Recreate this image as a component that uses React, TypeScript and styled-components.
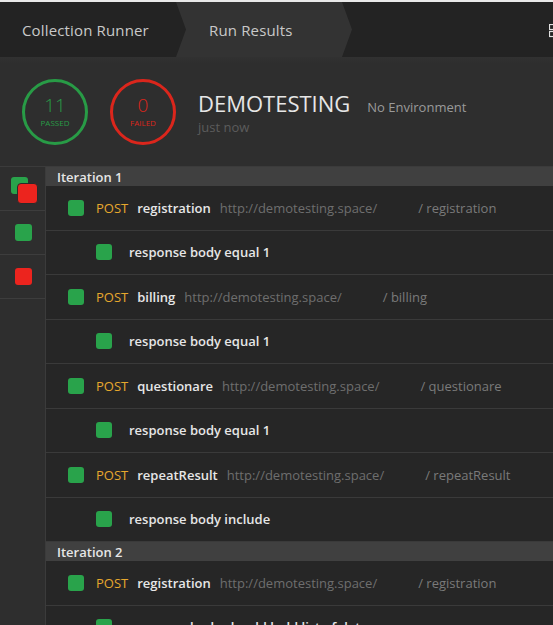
import React from 'react';
import styled, { createGlobalStyle } from 'styled-components';

const GlobalStyle = createGlobalStyle`
  html, body {
    margin: 0;
    padding: 0;
    background: #262626;
    overflow: hidden;
  }
  body {
    font-family: "Open Sans", "Liberation Sans", sans-serif;
  }
`;

const Page = styled.div`
  width: 553px;
  height: 625px;
  overflow: hidden;
  background: #262626;
`;

const Header = styled.div`
  display: flex;
  align-items: stretch;
  height: 55px;
  border-top: 2px solid #e9e9e9;
  background: #232323;
  overflow: hidden;
`;

const CollectionTab = styled.div`
  width: 176px;
  flex-shrink: 0;
  display: flex;
  align-items: center;
  padding-left: 22px;
  box-sizing: border-box;
  font-size: 15px;
  letter-spacing: 0.15px;
  color: #c9c9c9;
`;

const RunTab = styled.div`
  width: 176px;
  flex-shrink: 0;
  display: flex;
  align-items: center;
  padding-left: 33px;
  box-sizing: border-box;
  background: #333333;
  font-size: 15px;
  letter-spacing: 0.15px;
  color: #c9c9c9;
  clip-path: polygon(0 0, 166px 0, 176px 50%, 166px 100%, 0 100%, 10px 50%);
`;

const HeaderSpacer = styled.div`
  flex: 1;
`;

const LayoutIcon = styled.svg`
  flex-shrink: 0;
  align-self: center;
  margin-right: -10px;
  margin-top: 2px;
`;

const Summary = styled.div`
  display: flex;
  align-items: center;
  height: 109px;
  padding-left: 22px;
  gap: 22px;
  background: linear-gradient(#313131 0, #2e2e2e 6px, #2e2e2e 100%);
`;

const Ring = styled.div<{ $color: string }>`
  width: 66px;
  height: 66px;
  box-sizing: border-box;
  border-radius: 50%;
  border: 3px solid ${(p) => p.$color};
  color: ${(p) => p.$color};
  display: flex;
  flex-direction: column;
  align-items: center;
  justify-content: center;
`;

const RingCount = styled.div`
  font-size: 19px;
  font-weight: 300;
  line-height: 19px;
`;

const RingLabel = styled.div`
  font-size: 8px;
  line-height: 10px;
  margin-top: 3px;
  text-transform: uppercase;
`;

const TitleBlock = styled.div`
  display: flex;
  flex-direction: column;
  margin-top: 1px;
`;

const TitleLine = styled.div`
  display: flex;
  align-items: baseline;
  gap: 17px;
`;

const Title = styled.div`
  font-size: 22px;
  line-height: 30px;
  color: #e6e6e6;
`;

const EnvName = styled.div`
  font-size: 13px;
  color: #9a9a9a;
`;

const TimeAgo = styled.div`
  font-size: 13px;
  line-height: 18px;
  color: #5c5c5c;
`;

const Body = styled.div`
  display: flex;
  border-top: 1px solid #3b3b3b;
`;

const Sidebar = styled.div`
  width: 45px;
  flex-shrink: 0;
  background: #2e2e2e;
  border-right: 1px solid #3b3b3b;
  min-height: 460px;
`;

const SideCell = styled.div`
  height: 43px;
  border-bottom: 1px solid #3d3d3d;
  display: flex;
  align-items: center;
  justify-content: center;
  padding-left: 2px;
  box-sizing: content-box;
`;

const Square = styled.span<{ $fail?: boolean; $size?: number }>`
  display: inline-block;
  flex-shrink: 0;
  width: ${(p) => p.$size ?? 16}px;
  height: ${(p) => p.$size ?? 16}px;
  border-radius: 3px;
  background: ${(p) => (p.$fail ? '#ec241e' : '#29a34b')};
`;

const Stack = styled.div`
  position: relative;
  width: 26px;
  height: 25px;
  margin-top: 1px;
  margin-left: 1px;
`;

const StackBack = styled(Square)`
  position: absolute;
  left: 0;
  top: 0;
`;

const StackFront = styled(Square)`
  position: absolute;
  left: 6px;
  top: 6px;
  border: 1px solid #2a2a2a;
  border-radius: 4px;
`;

const List = styled.div`
  flex: 1;
  min-width: 0;
`;

const IterationHead = styled.div`
  height: 19px;
  display: flex;
  align-items: center;
  padding-left: 11px;
  background: #404040;
  color: #e6e6e6;
  font-size: 13px;
  font-weight: 600;
`;

const Row = styled.div<{ $nested?: boolean }>`
  height: 44.5px;
  box-sizing: border-box;
  display: flex;
  align-items: center;
  padding-left: ${(p) => (p.$nested ? 50 : 22)}px;
  border-bottom: 1px solid #3a3a3a;
  font-size: 13px;
  white-space: nowrap;
  overflow: hidden;
`;

const Method = styled.span`
  margin-left: 12px;
  color: #e6a82d;
`;

const ReqName = styled.span`
  margin-left: 9px;
  color: #e6e6e6;
  font-weight: 600;
`;

const Url = styled.span`
  margin-left: 9px;
  color: #6e6e6e;
`;

const Path = styled.span`
  margin-left: 41px;
  color: #7a7a7a;
`;

const TestName = styled.span`
  margin-left: 17px;
  color: #e6e6e6;
  font-weight: 600;
`;

type Item =
  | { kind: 'req'; name: string }
  | { kind: 'test'; name: string };

const iterations: { title: string; items: Item[] }[] = [
  {
    title: 'Iteration 1',
    items: [
      { kind: 'req', name: 'registration' },
      { kind: 'test', name: 'response body equal 1' },
      { kind: 'req', name: 'billing' },
      { kind: 'test', name: 'response body equal 1' },
      { kind: 'req', name: 'questionare' },
      { kind: 'test', name: 'response body equal 1' },
      { kind: 'req', name: 'repeatResult' },
      { kind: 'test', name: 'response body include' },
    ],
  },
  {
    title: 'Iteration 2',
    items: [
      { kind: 'req', name: 'registration' },
      { kind: 'test', name: 'response body should hold list of data' },
    ],
  },
];

export default function App() {
  return (
    <>
      <GlobalStyle />
      <Page>
        <Header>
          <CollectionTab>Collection Runner</CollectionTab>
          <RunTab>Run Results</RunTab>
          <HeaderSpacer />
          <LayoutIcon width="14" height="14" viewBox="0 0 14 14">
            <rect x="0.5" y="0.5" width="5" height="5" fill="none" stroke="#e0e0e0" strokeWidth="1.2" />
            <rect x="0.5" y="7.5" width="5" height="5" fill="none" stroke="#e0e0e0" strokeWidth="1.2" />
            <rect x="8.5" y="0.5" width="5" height="5" fill="none" stroke="#e0e0e0" strokeWidth="1.2" />
            <rect x="8.5" y="7.5" width="5" height="5" fill="none" stroke="#e0e0e0" strokeWidth="1.2" />
          </LayoutIcon>
        </Header>

        <Summary>
          <Ring $color="#289b46">
            <RingCount>11</RingCount>
            <RingLabel>Passed</RingLabel>
          </Ring>
          <Ring $color="#db261c">
            <RingCount>0</RingCount>
            <RingLabel>Failed</RingLabel>
          </Ring>
          <TitleBlock>
            <TitleLine>
              <Title>DEMOTESTING</Title>
              <EnvName>No Environment</EnvName>
            </TitleLine>
            <TimeAgo>just now</TimeAgo>
          </TitleBlock>
        </Summary>

        <Body>
          <Sidebar>
            <SideCell>
              <Stack>
                <StackBack $size={17} />
                <StackFront $fail $size={19} />
              </Stack>
            </SideCell>
            <SideCell>
              <Square $size={17} />
            </SideCell>
            <SideCell>
              <Square $fail $size={17} />
            </SideCell>
          </Sidebar>

          <List>
            {iterations.map((it) => (
              <React.Fragment key={it.title}>
                <IterationHead>{it.title}</IterationHead>
                {it.items.map((item, i) =>
                  item.kind === 'req' ? (
                    <Row key={i}>
                      <Square />
                      <Method>POST</Method>
                      <ReqName>{item.name}</ReqName>
                      <Url>http://demotesting.space/</Url>
                      <Path>/ {item.name}</Path>
                    </Row>
                  ) : (
                    <Row key={i} $nested>
                      <Square />
                      <TestName>{item.name}</TestName>
                    </Row>
                  )
                )}
              </React.Fragment>
            ))}
          </List>
        </Body>
      </Page>
    </>
  );
}
